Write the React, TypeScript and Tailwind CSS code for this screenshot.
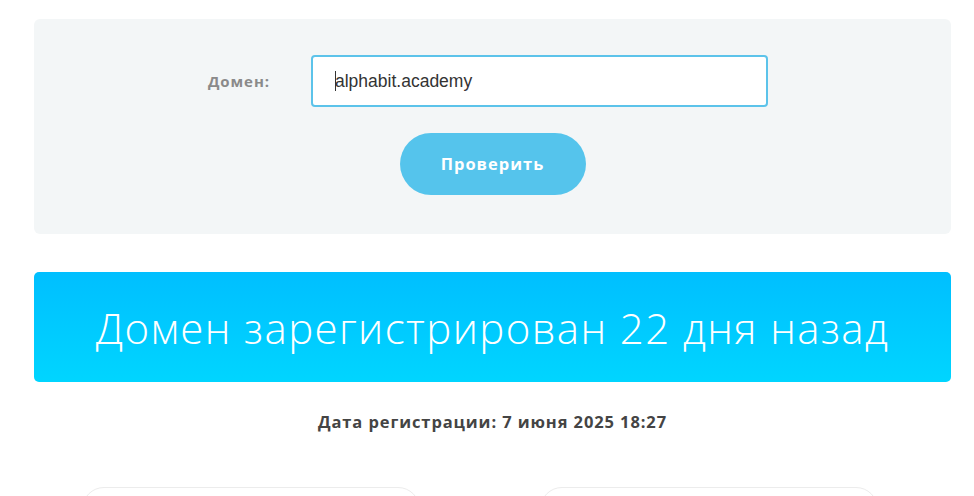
export default function App() {
  return (
    <div className="min-h-[496px] w-[974px] bg-white overflow-hidden font-['Open_Sans',sans-serif]">
      <div className="ml-[34px] w-[917px] pt-[19px]">
        {/* form panel */}
        <div className="rounded-[6px] bg-[#f3f6f7] pt-[36px] pb-[39px]">
          <div className="flex items-center">
            <label className="ml-[174px] w-[103px] text-[15px] font-bold tracking-[0.9px] text-[#8a8a8a]">Домен:</label>
            <div className="flex h-[52px] w-[457px] items-center rounded-[4px] border-2 border-[#5cc3ea] bg-white pl-[22px] font-['Liberation_Sans',sans-serif] text-[17.5px] text-[#333]">
              <span className="mr-[-1px] inline-block h-[20px] w-px bg-[#333]" />
              alphabit.academy
            </div>
          </div>
          <div className="mt-[26px] flex justify-center">
            <button className="h-[62px] w-[186px] rounded-full bg-[#55c4ec] text-[16.5px] font-bold tracking-[1px] text-white">
              Проверить
            </button>
          </div>
        </div>

        {/* result banner */}
        <div className="mt-[38px] flex h-[110px] items-center justify-center rounded-[5px] bg-gradient-to-b from-[#00bfff] to-[#00d5ff]">
          <h1 className="text-[42px] font-light tracking-[1.4px] text-white">Домен зарегистрирован 22 дня назад</h1>
        </div>

        <p className="mt-[28px] text-center text-[16.5px] font-bold tracking-[0.9px] text-[#444]">
          Дата регистрации: 7 июня 2025 18:27
        </p>

        {/* info cards */}
        <div className="mt-[52px] flex gap-[120px] pl-[48px]">
          <div className="h-[120px] w-[338px] rounded-[22px] border border-[#ececec] bg-white" />
          <div className="h-[120px] w-[338px] rounded-[22px] border border-[#ececec] bg-white" />
        </div>
      </div>
    </div>
  );
}
